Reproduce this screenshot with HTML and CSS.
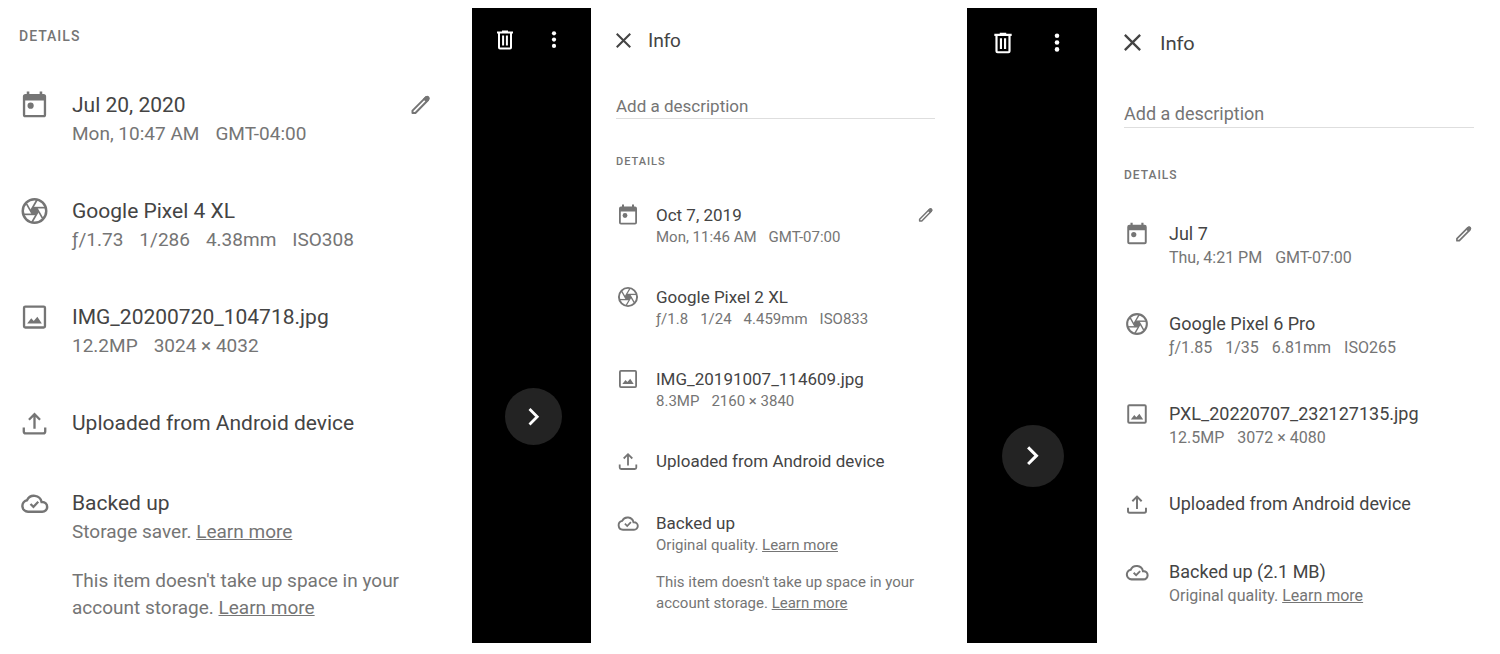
FILE: index.html
```html
<!DOCTYPE html>
<html lang="en">
<head>
  <meta charset="utf-8">
  <title>Photo Info</title>
  <link rel="stylesheet" href="styles.css">
</head>
<body>
  <!-- Shared icons -->
  <svg class="icon-defs" aria-hidden="true">
    <symbol id="calendar" viewBox="0 0 24 24">
      <path fill="currentColor" fill-rule="evenodd" d="M6 1.500h2v2h8v-2h2v2h1a2 2 0 0 1 2 2v14a2 2 0 0 1-2 2H5a2 2 0 0 1-2-2v-14a2 2 0 0 1 2-2h1zM4.800 8.500v11.200h14.400V8.500z"/>
      <circle cx="9" cy="12.500" r="2.400" fill="currentColor"/>
    </symbol>
    <symbol id="aperture" viewBox="0 0 24 24">
      <g fill="none" stroke="currentColor">
        <circle cx="12" cy="12" r="9.1" stroke-width="1.9"/>
        <g stroke-width="1.3">
          <path d="M10.5 9.4h9.8"/>
          <path d="M10.5 9.4h9.8" transform="rotate(60 12 12)"/>
          <path d="M10.5 9.4h9.8" transform="rotate(120 12 12)"/>
          <path d="M10.5 9.4h9.8" transform="rotate(180 12 12)"/>
          <path d="M10.5 9.4h9.8" transform="rotate(240 12 12)"/>
          <path d="M10.5 9.4h9.8" transform="rotate(300 12 12)"/>
        </g>
      </g>
      <path fill="currentColor" d="M10.5 9.4h3L15 12l-1.5 2.6h-3L9 12z"/>
    </symbol>
    <symbol id="image" viewBox="0 0 24 24">
      <rect x="3.9" y="3.9" width="16.2" height="16.2" rx="1" fill="none" stroke="currentColor" stroke-width="1.8"/>
      <path fill="currentColor" d="M6.300 17l3.200-4 1.900 2 2.800-3.200 3.500 5.200z"/>
    </symbol>
    <symbol id="upload" viewBox="0 0 24 24">
      <path fill="none" stroke="currentColor" stroke-width="1.800" d="M12 16.500V5.500M7.700 9.500L12 5.200l4.300 4.300M3.700 15.500v3a1.500 1.500 0 0 0 1.500 1.500h13.600a1.500 1.500 0 0 0 1.500-1.500v-3"/>
    </symbol>
    <symbol id="cloud" viewBox="0 0 24 24">
      <path fill="none" stroke="currentColor" stroke-width="1.900" d="M18 18.800H7a4.500 4.500 0 0 1-.800-8.900 6 6 0 0 1 11.300 1.300h.5a3.800 3.800 0 0 1 0 7.600z"/>
      <path fill="none" stroke="currentColor" stroke-width="1.700" d="M8.900 12.700l2.300 2.300 3.700-3.900"/>
    </symbol>
    <symbol id="pencil" viewBox="0 0 24 24">
      <path fill="none" stroke="currentColor" stroke-width="2" stroke-linejoin="round" d="M3.500 17.600L16.700 4.400a1.800 1.800 0 0 1 2.400 2.600L6.400 20H3.500z"/>
      <path fill="currentColor" d="M14 6l2.700-2.700a2.500 2.500 0 0 1 3.500 3.500L17.500 9.500z"/>
    </symbol>
    <symbol id="close" viewBox="5 5 14 14">
      <path fill="none" stroke="currentColor" stroke-width="1.900" d="M5.700 5.700l12.600 12.600M18.300 5.700L5.700 18.300"/>
    </symbol>
    <symbol id="trash" viewBox="0 0 24 24">
      <path fill="none" stroke="currentColor" stroke-width="2" d="M4 4.500h16M9 3.500h6M6 5v14.500a1 1 0 0 0 1 1h10a1 1 0 0 0 1-1V5"/>
      <path fill="none" stroke="currentColor" stroke-width="2" d="M10.100 7.500v10M13.900 7.500v10"/>
    </symbol>
    <symbol id="dots" viewBox="0 0 24 24">
      <g fill="currentColor">
        <circle cx="12" cy="5.300" r="2.100"/>
        <circle cx="12" cy="11.600" r="2.100"/>
        <circle cx="12" cy="17.900" r="2.100"/>
      </g>
    </symbol>
    <symbol id="chevron" viewBox="0 0 24 24">
      <path fill="none" stroke="currentColor" stroke-width="2.800" d="M7.500 4L15.200 11.700l-7.700 7.700"/>
    </symbol>
  </svg>

  <main class="photos">
    <section class="panel panel-large">
      <h2 class="details">Details</h2>
      <ul class="rows">
        <li class="row">
          <svg class="icon"><use href="#calendar"/></svg>
          <div class="text">
            <p class="title">Jul 20, 2020</p>
            <p class="meta"><span>Mon, 10:47 AM</span><span>GMT-04:00</span></p>
          </div>
          <button class="edit" aria-label="Edit date"><svg><use href="#pencil"/></svg></button>
        </li>
        <li class="row">
          <svg class="icon"><use href="#aperture"/></svg>
          <div class="text">
            <p class="title">Google Pixel 4 XL</p>
            <p class="meta"><span>ƒ/1.73</span><span>1/286</span><span>4.38mm</span><span>ISO308</span></p>
          </div>
        </li>
        <li class="row">
          <svg class="icon"><use href="#image"/></svg>
          <div class="text">
            <p class="title">IMG_20200720_104718.jpg</p>
            <p class="meta"><span>12.2MP</span><span>3024 × 4032</span></p>
          </div>
        </li>
        <li class="row">
          <svg class="icon"><use href="#upload"/></svg>
          <div class="text">
            <p class="title">Uploaded from Android device</p>
          </div>
        </li>
        <li class="row">
          <svg class="icon"><use href="#cloud"/></svg>
          <div class="text">
            <p class="title">Backed up</p>
            <p class="quality">Storage saver. <a href="#">Learn more</a></p>
            <p class="note">This item doesn't take up space in your<br>account storage. <a href="#">Learn more</a></p>
          </div>
        </li>
      </ul>
    </section>

    <div class="viewer viewer-small">
      <div class="toolbar">
        <button aria-label="Delete"><svg><use href="#trash"/></svg></button>
        <button aria-label="More options"><svg><use href="#dots"/></svg></button>
      </div>
      <button class="next" aria-label="Next photo"><svg><use href="#chevron"/></svg></button>
    </div>

    <section class="panel panel-small">
      <header class="header">
        <button class="close" aria-label="Close info"><svg><use href="#close"/></svg></button>
        <h1>Info</h1>
      </header>
      <input class="description" type="text" placeholder="Add a description" aria-label="Description">
      <h2 class="details">Details</h2>
      <ul class="rows">
        <li class="row">
          <svg class="icon"><use href="#calendar"/></svg>
          <div class="text">
            <p class="title">Oct 7, 2019</p>
            <p class="meta"><span>Mon, 11:46 AM</span><span>GMT-07:00</span></p>
          </div>
          <button class="edit" aria-label="Edit date"><svg><use href="#pencil"/></svg></button>
        </li>
        <li class="row">
          <svg class="icon"><use href="#aperture"/></svg>
          <div class="text">
            <p class="title">Google Pixel 2 XL</p>
            <p class="meta"><span>ƒ/1.8</span><span>1/24</span><span>4.459mm</span><span>ISO833</span></p>
          </div>
        </li>
        <li class="row">
          <svg class="icon"><use href="#image"/></svg>
          <div class="text">
            <p class="title">IMG_20191007_114609.jpg</p>
            <p class="meta"><span>8.3MP</span><span>2160 × 3840</span></p>
          </div>
        </li>
        <li class="row">
          <svg class="icon"><use href="#upload"/></svg>
          <div class="text">
            <p class="title">Uploaded from Android device</p>
          </div>
        </li>
        <li class="row">
          <svg class="icon"><use href="#cloud"/></svg>
          <div class="text">
            <p class="title">Backed up</p>
            <p class="quality">Original quality. <a href="#">Learn more</a></p>
            <p class="note">This item doesn't take up space in your<br>account storage. <a href="#">Learn more</a></p>
          </div>
        </li>
      </ul>
    </section>

    <div class="viewer viewer-medium">
      <div class="toolbar">
        <button aria-label="Delete"><svg><use href="#trash"/></svg></button>
        <button aria-label="More options"><svg><use href="#dots"/></svg></button>
      </div>
      <button class="next" aria-label="Next photo"><svg><use href="#chevron"/></svg></button>
    </div>

    <section class="panel panel-medium">
      <header class="header">
        <button class="close" aria-label="Close info"><svg><use href="#close"/></svg></button>
        <h1>Info</h1>
      </header>
      <input class="description" type="text" placeholder="Add a description" aria-label="Description">
      <h2 class="details">Details</h2>
      <ul class="rows">
        <li class="row">
          <svg class="icon"><use href="#calendar"/></svg>
          <div class="text">
            <p class="title">Jul 7</p>
            <p class="meta"><span>Thu, 4:21 PM</span><span>GMT-07:00</span></p>
          </div>
          <button class="edit" aria-label="Edit date"><svg><use href="#pencil"/></svg></button>
        </li>
        <li class="row">
          <svg class="icon"><use href="#aperture"/></svg>
          <div class="text">
            <p class="title">Google Pixel 6 Pro</p>
            <p class="meta"><span>ƒ/1.85</span><span>1/35</span><span>6.81mm</span><span>ISO265</span></p>
          </div>
        </li>
        <li class="row">
          <svg class="icon"><use href="#image"/></svg>
          <div class="text">
            <p class="title">PXL_20220707_232127135.jpg</p>
            <p class="meta"><span>12.5MP</span><span>3072 × 4080</span></p>
          </div>
        </li>
        <li class="row">
          <svg class="icon"><use href="#upload"/></svg>
          <div class="text">
            <p class="title">Uploaded from Android device</p>
          </div>
        </li>
        <li class="row">
          <svg class="icon"><use href="#cloud"/></svg>
          <div class="text">
            <p class="title">Backed up (2.1 MB)</p>
            <p class="quality">Original quality. <a href="#">Learn more</a></p>
          </div>
        </li>
      </ul>
    </section>
  </main>
</body>
</html>
```
FILE: styles.css
```css
* {
  box-sizing: border-box;
}
body {
  margin: 0;
  padding: 8px 0 11px;
  background: #fff;
  color: #757575;
  font-family: Roboto, Arial, sans-serif;
}
h1, h2, p, ul {
  margin: 0;
  padding: 0;
  font-weight: 400;
}
button {
  display: flex;
  padding: 0;
  border: none;
  background: none;
  color: inherit;
  cursor: pointer;
}
.icon-defs {
  display: none;
}
.photos {
  display: grid;
  grid-template-columns: 472fr 119px 376fr 130px 403fr;
}

/* Sizes for the three panels */
.panel-large {
  --title: 21px;
  --title-line: 32px;
  --sub: 19px;
  --sub-line: 26px;
  --note-line: 27px;
  --note-gap: 22px;
  --icon: 31px;
  --icon-gap: 22px;
  --edit: 24px;
  --row-gap: 48px;
  --meta-gap: 16px;
  --label: 14px;
  --label-line: 20px;
  --label-gap: 43px;
  padding: 18px 39px 22px 19px;
}
.panel-small {
  --title: 17px;
  --title-line: 24px;
  --sub: 15px;
  --sub-line: 20px;
  --note-line: 21px;
  --note-gap: 17px;
  --icon: 24px;
  --icon-gap: 16px;
  --edit: 18px;
  --row-gap: 38px;
  --meta-gap: 12px;
  --label: 11px;
  --label-line: 16px;
  --label-gap: 33px;
  --close: 15px;
  --close-gap: 17px;
  --info: 19px;
  --info-gap: 42px;
  --field-line: 25px;
  --field-gap: 35px;
  padding: 20px 32px 20px 25px;
}
.panel-medium {
  --title: 18px;
  --title-line: 26px;
  --sub: 16px;
  --sub-line: 22px;
  --icon: 26px;
  --icon-gap: 19px;
  --edit: 20px;
  --row-gap: 42px;
  --meta-gap: 13px;
  --label: 12px;
  --label-line: 18px;
  --label-gap: 37px;
  --close: 17px;
  --close-gap: 19px;
  --info: 20px;
  --info-gap: 46px;
  --field-line: 27px;
  --field-gap: 38px;
  padding: 21px 26px 22px 27px;
}

/* Info panel */
.header {
  display: flex;
  align-items: center;
  gap: var(--close-gap);
  height: var(--title-line);
  margin-bottom: var(--info-gap);
  color: #444;
}
.header h1 {
  font-family: Lato, Roboto, sans-serif;
  font-size: var(--info);
  line-height: var(--title-line);
}
.close svg {
  width: var(--close);
  height: var(--close);
}
.description {
  display: block;
  width: 100%;
  height: var(--field-line);
  margin-bottom: var(--field-gap);
  padding: 0 0 1px;
  border: none;
  border-bottom: 1px solid #dedede;
  background: none;
  font-family: inherit;
  font-size: var(--title);
  outline: none;
}
.description::placeholder {
  color: #757575;
}
.details {
  margin-bottom: var(--label-gap);
  font-size: var(--label);
  font-weight: 500;
  line-height: var(--label-line);
  letter-spacing: 1px;
  text-transform: uppercase;
}
.rows {
  display: flex;
  flex-direction: column;
  gap: var(--row-gap);
  list-style: none;
}
.row {
  display: flex;
  align-items: flex-start;
}
.icon {
  flex: none;
  width: var(--icon);
  height: var(--title-line);
  margin-right: var(--icon-gap);
}
.text {
  flex: 1;
  white-space: nowrap;
}
.title {
  color: #444;
  font-size: var(--title);
  line-height: var(--title-line);
}
.meta, .quality, .note {
  font-size: var(--sub);
  line-height: var(--sub-line);
}
.meta {
  display: flex;
  gap: var(--meta-gap);
}
.note {
  margin-top: var(--note-gap);
  line-height: var(--note-line);
}
.text a {
  color: inherit;
}
.edit {
  align-items: center;
  height: var(--title-line);
}
.edit svg {
  width: var(--edit);
  height: var(--edit);
}

/* Dark photo viewer strips */
.viewer {
  background: #000;
  color: #fff;
}
.viewer-small {
  --tool: 24px;
  --tool-gap: 25px;
  --next: 57px;
  --next-top: 336px;
  padding: 20px 0 0 21px;
}
.viewer-medium {
  --tool: 26px;
  --tool-gap: 28px;
  --next: 62px;
  --next-top: 369px;
  padding: 22px 0 0 23px;
}
.toolbar {
  display: flex;
  gap: var(--tool-gap);
}
.toolbar svg, .next svg {
  width: var(--tool);
  height: var(--tool);
}
.next {
  align-items: center;
  justify-content: center;
  width: var(--next);
  height: var(--next);
  margin-top: var(--next-top);
  margin-left: 12px;
  border-radius: 50%;
  background: #232323;
}
```
